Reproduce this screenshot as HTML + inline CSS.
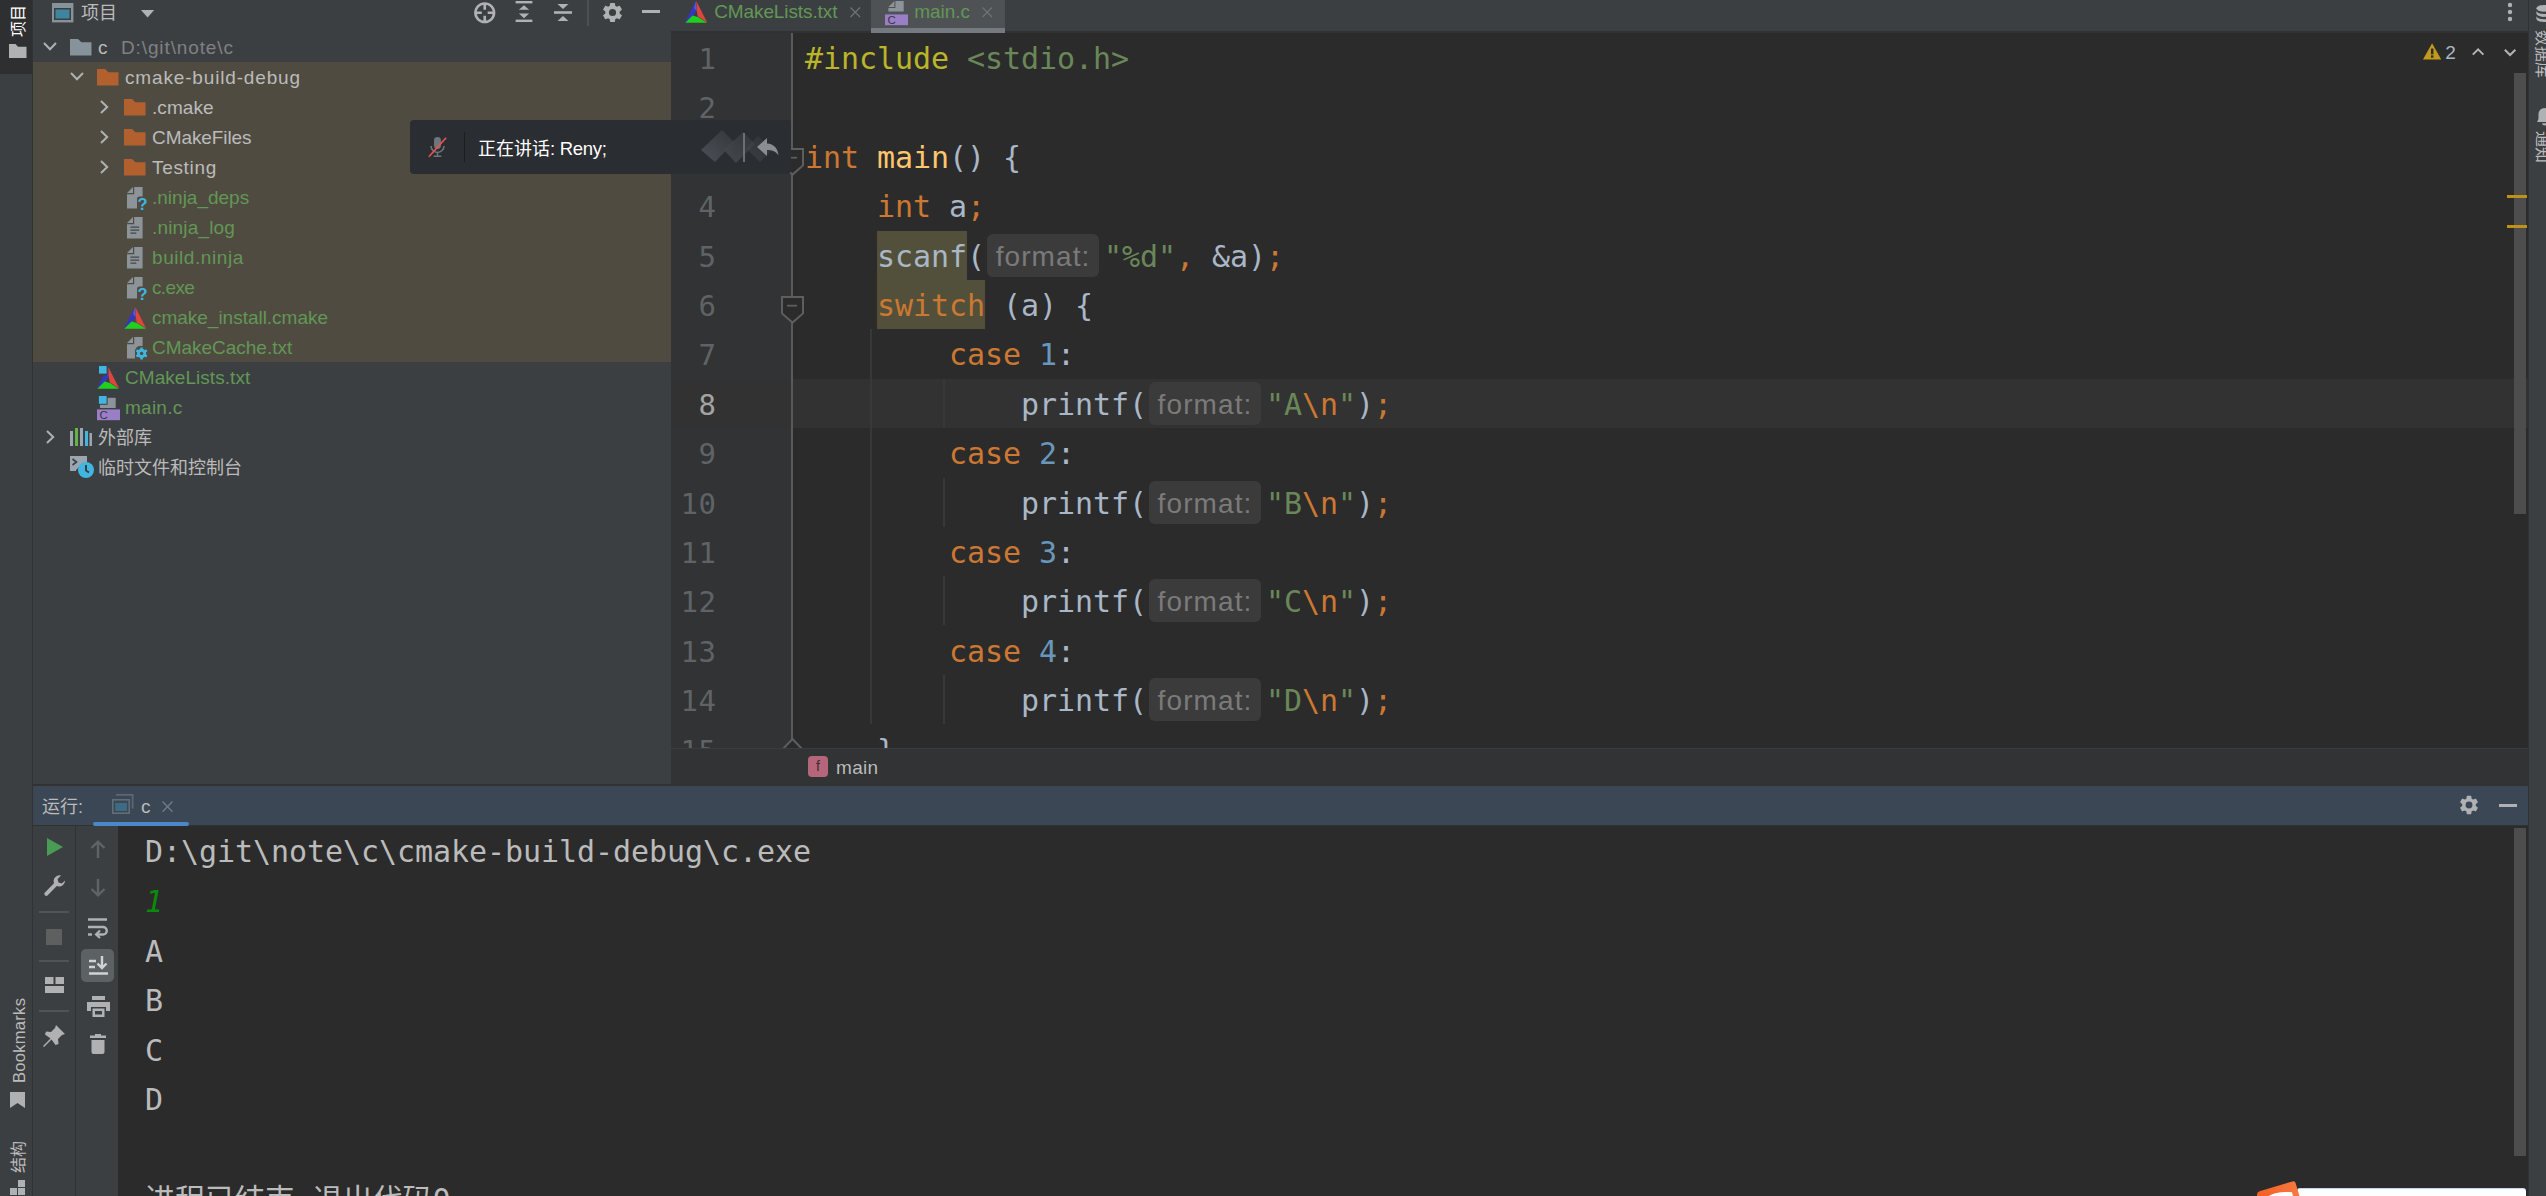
<!DOCTYPE html>
<html lang="zh-CN">
<head>
<meta charset="utf-8">
<title>c – main.c</title>
<style>
*{box-sizing:border-box;margin:0;padding:0}
html,body{width:2546px;height:1196px;overflow:hidden;background:#3c3f41}
body{position:relative;font-family:"Liberation Sans","Noto Sans CJK SC",sans-serif;color:#bbbbbb;font-size:20px}
.abs{position:absolute}
svg{position:absolute;overflow:visible}
#lstripe{left:0;top:0;width:33px;height:1196px;background:#3c3f41;border-right:1px solid #323232}
#lstripe .sel{left:0;top:0;width:32px;height:74px;background:#2d2f30}
.vtxt{position:absolute;white-space:nowrap;transform-origin:0 0;transform:rotate(-90deg);font-size:16px;line-height:20px;color:#bbbbbb}
#proj{left:33px;top:0;width:638px;height:784px;background:#3c3f41;overflow:hidden}
#proj .hl{left:0;top:62px;width:638px;height:300px;background:#4f4b41}
.row{position:absolute;left:0;height:30px;line-height:30px;white-space:nowrap;font-size:19px;color:#bbbbbb}
.row .t{position:absolute;top:0}
.g{color:#629755}
.dim{color:#7f8183}
.cjk{font-size:18px}
#tabs{left:671px;top:0;width:1857px;height:33px;background:#3c3f41;border-bottom:2px solid #2f3133}
#ed{left:671px;top:33px;width:1857px;height:715px;background:#2b2b2b;overflow:hidden}
#gut{left:0;top:0;width:120px;height:717px;background:#313335}
#gutline{left:120px;top:0;width:2px;height:717px;background:#5a5a5a}
.ln{position:absolute;left:0;width:45.500px;text-align:right;font-family:"DejaVu Sans Mono","Liberation Mono",monospace;font-size:29px;letter-spacing:0.500px;line-height:53px;height:49.4px;color:#606366}
.cl{position:absolute;left:134px;white-space:pre;font-family:"DejaVu Sans Mono","Liberation Mono",monospace;font-size:30px;letter-spacing:-0.06px;line-height:52.6px;height:49.4px;color:#a9b7c6}
.k{color:#cc7832}.s{color:#6a8759}.n{color:#6897bb}.f{color:#ffc66d}.pp{color:#bbb529}
.u{background:#52503a;display:inline-block;height:49.4px;vertical-align:top}
.hint{display:inline-block;font-family:"Liberation Sans",sans-serif;font-size:28px;color:#7a7a7a;background:#3b3b3b;border-radius:6px;height:43px;line-height:45px;vertical-align:top;margin-top:3px;margin-left:2px;margin-right:5px;width:112px;text-align:center;letter-spacing:1.1px;white-space:pre}
.guide{position:absolute;width:2px;background:#383838}
#crumb{left:671px;top:748px;width:1857px;height:36px;background:#313335;border-top:1px solid #3a3c3e}
#runhdr{left:33px;top:786px;width:2495px;height:40px;background:#3b4754;border-bottom:1px solid #2f3133}
#runbody{left:33px;top:826px;width:2495px;height:370px;background:#2b2b2b;overflow:hidden}
#tb1{left:0;top:0;width:43px;height:371px;background:#3c3f41;border-right:1px solid #323232}
#tb2{left:43px;top:0;width:42px;height:371px;background:#3c3f41}
.co{position:absolute;left:112px;white-space:pre;font-family:"DejaVu Sans Mono","Liberation Mono","Noto Sans CJK SC",monospace;font-size:30px;letter-spacing:-0.06px;line-height:49.6px;height:49.6px;color:#bbbbbb}
#rstripe{left:2528px;top:0;width:18px;height:1196px;background:#3c3f41;border-left:1px solid #323232}
</style>
</head>
<body>

<div id="lstripe" class="abs">
  <div class="sel abs"></div>
  <div class="vtxt" style="left:7px;top:37px;color:#ffffff;font-size:16px;line-height:24px">项目</div>
  <svg style="left:8.500px;top:44.300px" width="17.500" height="14" viewBox="0 0 17.500 14"><path d="M0 0h6.500l2.500 2.800h8.500V14H0z" fill="#afb1b3"/></svg>
  <div class="vtxt" style="left:9px;top:1083px;font-size:16.500px;line-height:20px;letter-spacing:0.300px">Bookmarks</div>
  <svg style="left:10px;top:1092px" width="15" height="16" viewBox="0 0 15 16"><path d="M0 0h15v16l-7.5-5L0 16z" fill="#afb1b3"/></svg>
  <div class="vtxt" style="left:7px;top:1172.500px;font-size:16px;line-height:24px">结构</div>
  <svg style="left:10px;top:1180px" width="15" height="16" viewBox="0 0 15 16"><rect x="8" y="0" width="7" height="7" fill="#afb1b3"/><rect x="0" y="8" width="7" height="7" fill="#afb1b3"/><rect x="8" y="8" width="7" height="7" fill="#afb1b3"/></svg>
</div>

<div id="proj" class="abs">
  <div class="hl abs"></div>
  <svg style="left:19.300px;top:3.200px" width="22" height="20" viewBox="0 0 22 20"><rect x="0" y="0" width="21.400" height="19.400" fill="#87939a"/><rect x="2" y="5" width="17" height="12" fill="#3c3f41"/><rect x="3.5" y="6.5" width="14" height="9" fill="#3e86a0"/></svg>
  <div class="row" style="top:-2px;left:48px"><span class="t cjk" style="left:0;letter-spacing:0">项目</span></div>
  <svg style="left:107.500px;top:9.900px" width="13.200" height="7.500" viewBox="0 0 13.200 7.500"><path d="M0 0h13.200l-6.600 7.500z" fill="#afb1b3"/></svg>
  <svg style="left:440px;top:0.500px" width="23.500" height="23.500" viewBox="0 0 24 24" fill="none" stroke="#afb1b3" stroke-width="2.700"><circle cx="12" cy="12" r="9.5"/><path d="M12 2v7M12 15v7M2 12h7M15 12h7"/></svg>
  <svg style="left:481px;top:1.200px" width="20" height="21.400" viewBox="0 0 20 23" fill="#afb1b3"><rect x="1" y="0" width="18" height="2.6"/><rect x="1" y="20" width="18" height="2.6"/><path d="M10 4.5l5.5 5h-11zM10 18.5l5.5-5h-11z"/></svg>
  <svg style="left:520px;top:1px" width="20" height="23" viewBox="0 0 20 23" fill="#afb1b3"><rect x="1" y="10.2" width="18" height="2.6"/><path d="M10 8l5.5-5h-11zM10 15l5.5 5h-11z"/></svg>
  <div class="abs" style="left:553.500px;top:0;width:2px;height:26px;background:#4d4f51"></div>
<svg style="left:569px;top:2px" width="21" height="21" viewBox="1.5 1.5 21 21"><path fill="#afb1b3" d="M19.14 12.94c.04-.3.06-.61.06-.94s-.02-.64-.07-.94l2.03-1.58a.49.49 0 0 0 .12-.61l-1.92-3.32a.49.49 0 0 0-.59-.22l-2.39.96a7 7 0 0 0-1.62-.94l-.36-2.54a.48.48 0 0 0-.48-.41h-3.84a.48.48 0 0 0-.47.41l-.36 2.54c-.59.24-1.13.57-1.62.94l-2.39-.96a.48.48 0 0 0-.59.22L2.74 8.87a.48.48 0 0 0 .12.61l2.03 1.58c-.05.3-.09.63-.09.94s.02.64.07.94l-2.03 1.58a.49.49 0 0 0-.12.61l1.92 3.32c.12.22.37.29.59.22l2.39-.96c.5.38 1.03.7 1.62.94l.36 2.54c.05.24.24.41.48.41h3.84c.24 0 .44-.17.47-.41l.36-2.54c.59-.24 1.13-.56 1.62-.94l2.39.96c.22.08.47 0 .59-.22l1.92-3.32a.48.48 0 0 0-.12-.61l-2.01-1.58zM12 15.6A3.6 3.6 0 1 1 12 8.4a3.6 3.6 0 0 1 0 7.2z"/></svg>
  <div class="abs" style="left:609px;top:10px;width:18px;height:3px;background:#afb1b3"></div>
  <svg style="left:10px;top:42px" width="14" height="9" viewBox="0 0 14 9" fill="none" stroke="#afb1b3" stroke-width="2"><path d="M1 1l6 6.2L13 1"/></svg>
  <svg style="left:36.7px;top:39px" width="21.5" height="16.5" viewBox="0 0 21.5 16.5"><path d="M0 0h8l3.4 3.3H21.5V16.5H0z" fill="#87939a"/></svg>
  <div class="row" style="top:33px"><span class="t " style="left:65px;letter-spacing:0.9px">c</span><span class="t dim" style="left:88px;letter-spacing:0.88px">D:\git\note\c</span></div>
  <svg style="left:37px;top:72px" width="14" height="9" viewBox="0 0 14 9" fill="none" stroke="#afb1b3" stroke-width="2"><path d="M1 1l6 6.2L13 1"/></svg>
  <svg style="left:63.7px;top:69px" width="21.5" height="16.5" viewBox="0 0 21.5 16.5"><path d="M0 0h8l3.4 3.3H21.5V16.5H0z" fill="#b3602f"/></svg>
  <div class="row" style="top:63px"><span class="t " style="left:92px;letter-spacing:0.84px">cmake-build-debug</span></div>
  <svg style="left:67px;top:100px" width="9" height="14" viewBox="0 0 9 14" fill="none" stroke="#afb1b3" stroke-width="2"><path d="M1 1l6.2 6L1 13"/></svg>
  <svg style="left:90.7px;top:99px" width="21.5" height="16.5" viewBox="0 0 21.5 16.5"><path d="M0 0h8l3.4 3.3H21.5V16.5H0z" fill="#b3602f"/></svg>
  <div class="row" style="top:93px"><span class="t " style="left:119px;letter-spacing:0.07px">.cmake</span></div>
  <svg style="left:67px;top:130px" width="9" height="14" viewBox="0 0 9 14" fill="none" stroke="#afb1b3" stroke-width="2"><path d="M1 1l6.2 6L1 13"/></svg>
  <svg style="left:90.7px;top:129px" width="21.5" height="16.5" viewBox="0 0 21.5 16.5"><path d="M0 0h8l3.4 3.3H21.5V16.5H0z" fill="#b3602f"/></svg>
  <div class="row" style="top:123px"><span class="t " style="left:119px;letter-spacing:-0.08px">CMakeFiles</span></div>
  <svg style="left:67px;top:160px" width="9" height="14" viewBox="0 0 9 14" fill="none" stroke="#afb1b3" stroke-width="2"><path d="M1 1l6.2 6L1 13"/></svg>
  <svg style="left:90.7px;top:159px" width="21.5" height="16.5" viewBox="0 0 21.5 16.5"><path d="M0 0h8l3.4 3.3H21.5V16.5H0z" fill="#b3602f"/></svg>
  <div class="row" style="top:153px"><span class="t " style="left:119px;letter-spacing:0.68px">Testing</span></div>
  <svg style="left:94px;top:187.2px" width="22" height="24" viewBox="0 0 22 24"><path d="M7.2 0H15.6V9.500H12.500Q10 9.500 10 12V21.500H0V7.2H7.2z" fill="#8c949a"/><path d="M0 6L6 0v6z" fill="#8c949a"/><text x="10.600" y="22.600" font-family="Liberation Sans,sans-serif" font-weight="bold" font-size="16.500" fill="#3fb5e0">?</text></svg>
  <div class="row" style="top:183px"><span class="t g" style="left:119px;letter-spacing:0.0px">.ninja_deps</span></div>
  <svg style="left:94px;top:217.2px" width="15.6" height="21.5" viewBox="0 0 15.6 21.5"><path d="M7.2 0H15.6V21.5H0V7.2H7.2z" fill="#8c949a"/><path d="M0 6L6 0v6z" fill="#8c949a"/><path d="M3.4 10.2h8.800M3.4 13.100h8.800M3.4 16.100h5.900" stroke="#45464a" stroke-width="1.300"/></svg>
  <div class="row" style="top:213px"><span class="t g" style="left:119px;letter-spacing:0.17px">.ninja_log</span></div>
  <svg style="left:94px;top:247.2px" width="15.6" height="21.5" viewBox="0 0 15.6 21.5"><path d="M7.2 0H15.6V21.5H0V7.2H7.2z" fill="#8c949a"/><path d="M0 6L6 0v6z" fill="#8c949a"/><path d="M3.4 10.2h8.800M3.4 13.100h8.800M3.4 16.100h5.900" stroke="#45464a" stroke-width="1.300"/></svg>
  <div class="row" style="top:243px"><span class="t g" style="left:119px;letter-spacing:0.57px">build.ninja</span></div>
  <svg style="left:94px;top:277.2px" width="22" height="24" viewBox="0 0 22 24"><path d="M7.2 0H15.6V9.500H12.500Q10 9.500 10 12V21.500H0V7.2H7.2z" fill="#8c949a"/><path d="M0 6L6 0v6z" fill="#8c949a"/><text x="10.600" y="22.600" font-family="Liberation Sans,sans-serif" font-weight="bold" font-size="16.500" fill="#3fb5e0">?</text></svg>
  <div class="row" style="top:273px"><span class="t g" style="left:119px;letter-spacing:-0.63px">c.exe</span></div>
  <svg style="left:91px;top:307px" width="22.200" height="22" viewBox="0 0 22.200 22"><path d="M10.800 0L0 21.600l8.400-6.600 3.200-5.200z" fill="#3535c0"/><path d="M11.300 0l10.900 21.400-9.400-5.800-1-5.500z" fill="#e0443f"/><path d="M.300 21.800h21.600L12.800 16 7.600 14.400z" fill="#1fd11f"/><path d="M10.800 0L9 7l2.600 3z" fill="#6a6ae0" opacity=".7"/></svg>
  <div class="row" style="top:303px"><span class="t g" style="left:119px;letter-spacing:-0.02px">cmake_install.cmake</span></div>
  <svg style="left:94px;top:337.2px" width="22" height="24" viewBox="0 0 22 24"><path d="M7.2 0H15.6V9H12Q8.500 10 8 14V21.500H0V7.2H7.2z" fill="#8c949a"/><path d="M0 6L6 0v6z" fill="#8c949a"/><g transform="translate(8.600,10.400)"><circle cx="6" cy="6" r="3.300" fill="none" stroke="#3fb5e0" stroke-width="2.600"/><path d="M6 0v12M.800 3l10.400 6M.800 9l10.400-6" stroke="#3fb5e0" stroke-width="2.500"/><circle cx="6" cy="6" r="1.700" fill="#4f4b41"/></g></svg>
  <div class="row" style="top:333px"><span class="t g" style="left:119px;letter-spacing:-0.02px">CMakeCache.txt</span></div>
  <svg style="left:64.1px;top:367px" width="22.200" height="22" viewBox="0 0 22.200 22"><path d="M10.800 0L0 21.600l8.400-6.600 3.200-5.200z" fill="#3535c0"/><path d="M11.300 0l10.900 21.400-9.400-5.800-1-5.500z" fill="#e0443f"/><path d="M.300 21.800h21.600L12.800 16 7.600 14.400z" fill="#1fd11f"/><path d="M10.800 0L9 7l2.600 3z" fill="#6a6ae0" opacity=".7"/><rect x="1.200" y="-1.200" width="9.600" height="9.800" fill="#3c3f41"/><rect x="2" y="-1" width="7.600" height="7.600" fill="#40b6e0"/></svg>
  <div class="row" style="top:363px"><span class="t g" style="left:92px;letter-spacing:0.05px">CMakeLists.txt</span></div>
  <svg style="left:64.1px;top:395.8px" width="23" height="24.200" viewBox="0 0 23 24.200"><path d="M3 1.800h15.700V12H3z" fill="#8c949a"/><rect x="1" y="-1" width="9.600" height="9.800" fill="#3c3f41"/><rect x="1.900" y="0" width="7.700" height="7.800" fill="#40b6e0"/><rect x="0" y="13.400" width="23" height="10.800" fill="#9a7fc7"/><text x="2.600" y="22.900" font-family="Liberation Sans,sans-serif" font-size="11.500" fill="#38323f">C</text></svg>
  <div class="row" style="top:393px"><span class="t g" style="left:92px;letter-spacing:0.25px">main.c</span></div>
  <svg style="left:13px;top:430px" width="9" height="14" viewBox="0 0 9 14" fill="none" stroke="#afb1b3" stroke-width="2"><path d="M1 1l6.2 6L1 13"/></svg>
  <svg style="left:37px;top:428px" width="22" height="18" viewBox="0 0 22 18"><rect x="0" y="3" width="3" height="15" fill="#9aa7b0"/><rect x="5" y="0" width="3" height="18" fill="#62b543"/><rect x="10" y="0" width="3" height="18" fill="#9aa7b0"/><rect x="15" y="3" width="3" height="15" fill="#40b6e0"/><rect x="19.5" y="5" width="2.5" height="13" fill="#9aa7b0"/></svg>
  <div class="row" style="top:423px"><span class="t cjk" style="left:65px">外部库</span></div>
  <svg style="left:37px;top:454px" width="24" height="24" viewBox="0 0 24 24"><path d="M0 2h17v9h-6l-5 5v1H0z" fill="#9aa7b0"/><path d="M2.5 5l4 3-4 3" stroke="#3c3f41" stroke-width="1.6" fill="none"/><circle cx="16" cy="16" r="8" fill="#40b6e0"/><path d="M16 11v5.5l3 2" stroke="#3c3f41" stroke-width="2" fill="none"/></svg>
  <div class="row" style="top:453px"><span class="t cjk" style="left:65px">临时文件和控制台</span></div>
</div>

<div id="tabs" class="abs">
  <div class="abs" style="left:200px;top:0;width:134px;height:28px;background:#4e5254"></div>
  <div class="abs" style="left:200px;top:28px;width:134px;height:5px;background:#747a80"></div>
<svg style="left:13.799999999999955px;top:1.0999999999999996px" width="22.200" height="22" viewBox="0 0 22.200 22"><path d="M10.800 0L0 21.600l8.400-6.600 3.200-5.200z" fill="#3535c0"/><path d="M11.300 0l10.900 21.400-9.400-5.800-1-5.500z" fill="#e0443f"/><path d="M.300 21.800h21.600L12.800 16 7.600 14.400z" fill="#1fd11f"/><path d="M10.800 0L9 7l2.600 3z" fill="#6a6ae0" opacity=".7"/></svg>
  <div class="row" style="top:-3px;left:0"><span class="t g" style="left:43.200px;letter-spacing:-0.1px">CMakeLists.txt</span><span class="t g" style="left:243.300px;letter-spacing:-0.07px">main.c</span></div>
<svg style="left:179px;top:7px" width="10.500" height="10.500" viewBox="0 0 10.500 10.500" stroke="#6e7275" stroke-width="1.300"><path d="M.500 .500l9.500 9.500M10 .500L.500 10"/></svg><svg style="left:214.20000000000005px;top:1.4000000000000004px" width="23" height="24.200" viewBox="0 0 23 24.200"><path d="M10.400 0h8.300v10.400H3.400V6.900h7z" fill="#8c949a"/><path d="M3.400 5.900L9.400 0v5.900z" fill="#8c949a"/><rect x="0" y="13.400" width="23" height="10.800" fill="#9a7fc7"/><text x="2.600" y="22.900" font-family="Liberation Sans,sans-serif" font-size="11.500" fill="#38323f">C</text></svg><svg style="left:310.6px;top:7px" width="10.500" height="10.500" viewBox="0 0 10.500 10.500" stroke="#6e7275" stroke-width="1.300"><path d="M.500 .500l9.500 9.500M10 .500L.500 10"/></svg>
  <svg style="left:1836px;top:2px" width="6" height="20" viewBox="0 0 6 20" fill="#afb1b3"><circle cx="3" cy="3" r="2.200"/><circle cx="3" cy="10" r="2.200"/><circle cx="3" cy="17" r="2.200"/></svg>
</div>
<div id="ed" class="abs">
  <div id="gut" class="abs"></div>
  <div class="abs" style="left:122px;top:345.8px;width:1735px;height:49px;background:#323232"></div>
  <div class="abs" style="left:0;top:345.8px;width:120px;height:49px;background:#323232"></div>
  <div id="gutline" class="abs"></div>
  <div class="guide" style="left:199px;top:296.4px;height:395px"></div>
  <div class="guide" style="left:272px;top:345.8px;height:49px"></div>
  <div class="guide" style="left:272px;top:444.6px;height:49px"></div>
  <div class="guide" style="left:272px;top:543.4px;height:49px"></div>
  <div class="guide" style="left:272px;top:642.2px;height:49px"></div>
  <div class="ln" style="top:0.0px">1</div>
  <div class="ln" style="top:49.4px">2</div>
  <div class="ln" style="top:148.2px">4</div>
  <div class="ln" style="top:197.6px">5</div>
  <div class="ln" style="top:247.0px">6</div>
  <div class="ln" style="top:296.4px">7</div>
  <div class="ln" style="top:345.8px;color:#a4a3a3">8</div>
  <div class="ln" style="top:395.2px">9</div>
  <div class="ln" style="top:444.6px">10</div>
  <div class="ln" style="top:494.0px">11</div>
  <div class="ln" style="top:543.4px">12</div>
  <div class="ln" style="top:592.8px">13</div>
  <div class="ln" style="top:642.2px">14</div>
  <div class="ln" style="top:691.6px">15</div>
  <div class="cl" style="top:0.0px"><span class="pp">#include</span> <span class="s">&lt;stdio.h&gt;</span></div>
  <div class="cl" style="top:49.4px"></div>
  <div class="cl" style="top:98.8px"><span class="k">int</span> <span class="f">main</span>() {</div>
  <div class="cl" style="top:148.2px">    <span class="k">int</span> a<span class="k">;</span></div>
  <div class="cl" style="top:197.6px">    <span class="u">scanf</span>(<span class="hint">format:</span><span class="s">"%d"</span><span class="k">,</span> &amp;a)<span class="k">;</span></div>
  <div class="cl" style="top:247.0px">    <span class="u k">switch</span> (a) {</div>
  <div class="cl" style="top:296.4px">        <span class="k">case</span> <span class="n">1</span>:</div>
  <div class="cl" style="top:345.8px">            printf(<span class="hint">format:</span><span class="s">"A</span><span class="k">\n</span><span class="s">"</span>)<span class="k">;</span></div>
  <div class="cl" style="top:395.2px">        <span class="k">case</span> <span class="n">2</span>:</div>
  <div class="cl" style="top:444.6px">            printf(<span class="hint">format:</span><span class="s">"B</span><span class="k">\n</span><span class="s">"</span>)<span class="k">;</span></div>
  <div class="cl" style="top:494.0px">        <span class="k">case</span> <span class="n">3</span>:</div>
  <div class="cl" style="top:543.4px">            printf(<span class="hint">format:</span><span class="s">"C</span><span class="k">\n</span><span class="s">"</span>)<span class="k">;</span></div>
  <div class="cl" style="top:592.8px">        <span class="k">case</span> <span class="n">4</span>:</div>
  <div class="cl" style="top:642.2px">            printf(<span class="hint">format:</span><span class="s">"D</span><span class="k">\n</span><span class="s">"</span>)<span class="k">;</span></div>
  <div class="cl" style="top:691.6px">    }</div>
  <svg style="left:110px;top:263.200px" width="24" height="28" viewBox="0 0 24 28" fill="#2b2b2b" stroke="#5e5e5e" stroke-width="2"><path d="M1 1H22V17.400L11.500 26.600 1 17.400z"/><path d="M6 9.700h10" stroke-width="1.800"/></svg>
  <svg style="left:110px;top:703.500px" width="24" height="14" viewBox="0 0 24 14" fill="#2b2b2b" stroke="#5e5e5e" stroke-width="2"><path d="M0 14L11.500 2 23 14"/></svg>
  <svg style="left:110px;top:114.500px" width="24" height="28" viewBox="0 0 24 28" fill="#2b2b2b" stroke="#5e5e5e" stroke-width="2"><path d="M1 1H22V17.400L11.500 26.600 1 17.400z"/><path d="M6 9.700h10" stroke-width="1.800"/></svg>
  <svg style="left:1752px;top:10px" width="18.200" height="16.900" viewBox="0 0 19 17"><path d="M9.5 0L19 17H0z" fill="#c29a1b"/><rect x="8.3" y="5.5" width="2.6" height="6" fill="#2b2b2b"/><rect x="8.3" y="12.6" width="2.6" height="2.4" fill="#2b2b2b"/></svg>
  <div class="abs" style="left:1774.300px;top:6.800px;font-size:19px;line-height:26px;color:#a9b7c6">2</div>
<svg style="left:1800.800px;top:14.600px" width="12.200" height="7.400" viewBox="0 0 12.200 7.400" fill="none" stroke="#b4b4b4" stroke-width="2"><path d="M.800 6.600L6.100 1.400 11.400 6.600"/></svg><svg style="left:1832.900px;top:15.900px" width="12.200" height="7.400" viewBox="0 0 12.200 7.400" fill="none" stroke="#b4b4b4" stroke-width="2"><path d="M.800 .800L6.100 6 11.400 .800"/></svg>
  <div class="abs" style="left:1843px;top:40px;width:12px;height:441px;background:#4d4d4d"></div>
  <div class="abs" style="left:1836px;top:162px;width:20px;height:3px;background:#be9117"></div>
  <div class="abs" style="left:1836px;top:192px;width:20px;height:3px;background:#be9117"></div>
</div>

<div id="crumb" class="abs">
  <div class="abs" style="left:137px;top:7px;width:20px;height:20.500px;border-radius:4px;background:#b5667a;color:#3c2a30;font-size:14px;line-height:20px;text-align:center">f</div>
  <div class="abs" style="left:165px;top:5px;font-size:19px;line-height:28px;color:#bbbbbb;letter-spacing:0.300px">main</div>
</div>

<div class="abs" style="left:33px;top:784px;width:2495px;height:2px;background:#323232"></div>
<div id="runhdr" class="abs">
  <div class="abs cjk" style="left:9px;top:7px;line-height:28px;color:#bbbbbb;font-size:18px">运行:</div>
  <svg style="left:79px;top:8.400px" width="22" height="20" viewBox="0 0 22 20"><path d="M4 0h17.500v14.500h-1.800V1.800H4z" fill="#5a6873"/><rect x="0" y="5" width="18" height="15" fill="#5f6e79"/><rect x="1.600" y="6.600" width="14.800" height="11.800" fill="#3b4754"/><rect x="3.200" y="9" width="11.800" height="8" fill="#3d6b82"/></svg>
  <div class="abs" style="left:108px;top:6.500px;line-height:28px;font-size:19px;color:#bbbbbb">c</div>
  <svg style="left:128.600px;top:15.400px" width="11" height="11.200" viewBox="0 0 11 11.200" stroke="#6f7d89" stroke-width="1.300"><path d="M.500 .500l10 10.200M10.500 .500L.500 10.700"/></svg>
  <div class="abs" style="left:60px;top:36px;width:96px;height:4px;background:#4a88c7;border-radius:2px"></div>
<svg style="left:2426px;top:9px" width="20" height="20" viewBox="1.5 1.5 21 21"><path fill="#afb1b3" d="M19.14 12.94c.04-.3.06-.61.06-.94s-.02-.64-.07-.94l2.03-1.58a.49.49 0 0 0 .12-.61l-1.92-3.32a.49.49 0 0 0-.59-.22l-2.39.96a7 7 0 0 0-1.62-.94l-.36-2.54a.48.48 0 0 0-.48-.41h-3.84a.48.48 0 0 0-.47.41l-.36 2.54c-.59.24-1.13.57-1.62.94l-2.39-.96a.48.48 0 0 0-.59.22L2.74 8.87a.48.48 0 0 0 .12.61l2.03 1.58c-.05.3-.09.63-.09.94s.02.64.07.94l-2.03 1.58a.49.49 0 0 0-.12.61l1.92 3.32c.12.22.37.29.59.22l2.39-.96c.5.38 1.03.7 1.62.94l.36 2.54c.05.24.24.41.48.41h3.84c.24 0 .44-.17.47-.41l.36-2.54c.59-.24 1.13-.56 1.62-.94l2.39.96c.22.08.47 0 .59-.22l1.92-3.32a.48.48 0 0 0-.12-.61l-2.01-1.58zM12 15.6A3.6 3.6 0 1 1 12 8.4a3.6 3.6 0 0 1 0 7.2z"/></svg>
  <div class="abs" style="left:2466px;top:17.500px;width:17.500px;height:3px;background:#afb1b3"></div>
</div>
<div id="runbody" class="abs">
  <div id="tb1" class="abs">
    <svg style="left:14px;top:12px" width="16" height="18" viewBox="0 0 16 18"><path d="M0 0l16 9L0 18z" fill="#499c54"/></svg>
    <svg style="left:11px;top:49px" width="22" height="22" viewBox="0 0 22 22"><path d="M21 5.5a6 6 0 0 1-8.200 5.600L3.500 20.500a2 2 0 0 1-2.800-2.800L10 8.300A6 6 0 0 1 17 .5l-3.500 3.600 1 3.400 3.400 1z" fill="#afb1b3"/></svg>
    <div class="abs" style="left:6px;top:84.500px;width:30px;height:2px;background:#515456"></div>
    <div class="abs" style="left:13px;top:102.500px;width:16px;height:16px;background:#5e6060"></div>
    <div class="abs" style="left:6px;top:134px;width:30px;height:2px;background:#515456"></div>
    <svg style="left:12px;top:151px" width="19" height="16" viewBox="0 0 19 16" fill="#afb1b3"><rect x="0" y="0" width="8.500" height="7"/><rect x="10.500" y="0" width="8.500" height="7"/><rect x="0" y="9" width="19" height="7"/></svg>
    <div class="abs" style="left:6px;top:184px;width:30px;height:2px;background:#515456"></div>
    <svg style="left:10px;top:199px" width="22" height="22" viewBox="0 0 22 22" fill="#afb1b3"><path d="M13 0l9 9-3 1-4 4 .5 5-3 1-4-5.500L1 22l-1-1 7.500-7.500L2 9.500l1-3 5 .5 4-4z"/></svg>
  </div>
  <div id="tb2" class="abs">
    <svg style="left:14px;top:14px" width="16" height="18" viewBox="0 0 16 18" fill="none" stroke="#5f6366" stroke-width="2.4"><path d="M8 18V2M1.500 8L8 1.600 14.500 8"/></svg>
    <svg style="left:14px;top:53px" width="16" height="18" viewBox="0 0 16 18" fill="none" stroke="#5f6366" stroke-width="2.4"><path d="M8 0v16M1.500 10L8 16.400 14.500 10"/></svg>
    <svg style="left:12px;top:92.400px" width="21" height="20" viewBox="0 0 21 20" fill="none" stroke="#afb1b3" stroke-width="2.4"><path d="M0 1.500h19M0 9h15a3.600 3.600 0 0 1 0 7.500h-6"/><path d="M0 16.500h4" /><path d="M12 12.500l-4 4 4 3.500" stroke-width="2.200"/></svg>
    <div class="abs" style="left:5px;top:123px;width:33px;height:33px;border-radius:5px;background:#5c6164"></div>
    <svg style="left:13px;top:130px" width="19" height="19" viewBox="0 0 19 19" fill="none" stroke="#d0d2d4" stroke-width="2.400"><path d="M0 17.500h19M0 5h7M0 11h6M13 0v11M8.500 7.500L13 12l4.500-4.500"/></svg>
    <svg style="left:11px;top:170px" width="23" height="21" viewBox="0 0 23 21" fill="#afb1b3"><rect x="5" y="0" width="13" height="4"/><path d="M0 6h23v9h-4v-4H4v4H0z"/><path d="M5.500 12.500h12v8.500h-12zM8 15v3.500h7V15z" fill-rule="evenodd"/></svg>
    <svg style="left:14px;top:208px" width="16" height="20" viewBox="0 0 16 20" fill="#afb1b3"><path d="M5 0h6v1.500h5v2.500H0V1.500h5zM1.500 6h13v12a2 2 0 0 1-2 2h-9a2 2 0 0 1-2-2z"/></svg>
  </div>
  <div class="co" style="top:1.3px">D:\git\note\c\cmake-build-debug\c.exe</div>
  <div class="co" style="top:50.9px"><i style="color:#0a8a0a">1</i></div>
  <div class="co" style="top:100.5px">A</div>
  <div class="co" style="top:150.1px">B</div>
  <div class="co" style="top:199.7px">C</div>
  <div class="co" style="top:249.3px">D</div>
  <div class="co" style="top:348.5px">进程已结束,退出代码0</div>
  <div class="abs" style="left:2481px;top:2px;width:12px;height:328px;background:#4d4d4d"></div>
</div>

<div id="rstripe" class="abs">
  <svg style="left:7px;top:4.500px" width="16" height="19" viewBox="0 0 16 20" fill="#afb1b3"><ellipse cx="8" cy="3.500" rx="8" ry="3.500"/><path d="M0 6c0 2 3.600 3.500 8 3.500S16 8 16 6v3c0 2-3.600 3.500-8 3.500S0 11 0 9zM0 11.500C0 13.500 3.600 15 8 15s8-1.500 8-3.500v3c0 2-3.600 3.500-8 3.500s-8-1.500-8-3.500z"/></svg>
  <div class="vtxt" style="left:2px;top:30px;transform:rotate(90deg) translate(0,-22px);font-size:16px;line-height:22px;color:#bbbbbb">数据库</div>
  <svg style="left:7.500px;top:107.500px" width="15" height="18.500" viewBox="0 0 16 20" fill="#afb1b3"><path d="M8 0a6.500 6.500 0 0 1 6.500 6.500V12l1.500 3H0l1.500-3V6.500A6.500 6.500 0 0 1 8 0zM5.500 16.500h5a2.500 2.500 0 0 1-5 0z"/></svg>
  <div class="vtxt" style="left:2px;top:131px;transform:rotate(90deg) translate(0,-22px);font-size:16px;line-height:22px;color:#bbbbbb">通知</div>
</div>

<div class="abs" style="left:410px;top:120px;width:381px;height:54px;background:#2a2d31;border-radius:4px"></div>
<svg style="left:428px;top:136px" width="19" height="22.500" viewBox="0 0 22 26"><rect x="7" y="1" width="8" height="14" rx="4" fill="#70757b"/><path d="M3.500 11.500a7.500 7.500 0 0 0 15 0M11 19v4M6.500 23.500h9" fill="none" stroke="#70757b" stroke-width="1.800"/><path d="M1 24L21 2" stroke="#e8534f" stroke-width="2"/></svg>
<div class="abs" style="left:464px;top:132px;width:1px;height:30px;background:#1c1e21"></div>
<div class="abs" style="left:478px;top:134.500px;line-height:28px;color:#ffffff;white-space:nowrap;font-size:18.500px;letter-spacing:-0.300px"><span style="font-size:18px;letter-spacing:0">正在讲话</span>: Reny;</div>
<svg style="left:698px;top:128px" width="84" height="38" viewBox="0 0 84 38"><defs><linearGradient id="lg" x1="0" y1="1" x2="1" y2="0"><stop offset="0" stop-color="#4c5056"/><stop offset="1" stop-color="#34373c"/></linearGradient></defs><path d="M3 22L24 2l12 12-19 20z" fill="url(#lg)"/><path d="M26 22L45 4l12 12-19 19z" fill="url(#lg)" opacity="0.800"/><path d="M48 20L60 8l14 14-12 12z" fill="url(#lg)" opacity="0.500"/><rect x="45" y="5" width="2" height="29" fill="#6c7076"/><path d="M59 19l10-9v5.500c7 .5 11 5 11.500 12-2.500-4-6-5.500-11.500-5.500V28z" fill="#8a8e94"/></svg>
<!-- IME bar -->
<div class="abs" style="left:2297px;top:1187.500px;width:228.500px;height:14px;background:#fdfeff;border-radius:3px;border-top:1px solid #c3d4ee"></div>
<svg style="left:2256px;top:1180px" width="46" height="20" viewBox="0 0 46 20"><defs><linearGradient id="og" x1="0" y1="0" x2="1" y2="0"><stop offset="0" stop-color="#f45f22"/><stop offset="1" stop-color="#f77a42"/></linearGradient></defs><path d="M3.500 11.200l33-9.800a2.500 2.500 0 0 1 3.100 1.700l5.400 18H1.200l-.2-6.500a3.500 3.500 0 0 1 2.500-3.400z" fill="url(#og)"/><path d="M9 20c3-5.500 12-8.500 27-7.800l2 7.800z" fill="#ffffff"/></svg>

</body>
</html>
